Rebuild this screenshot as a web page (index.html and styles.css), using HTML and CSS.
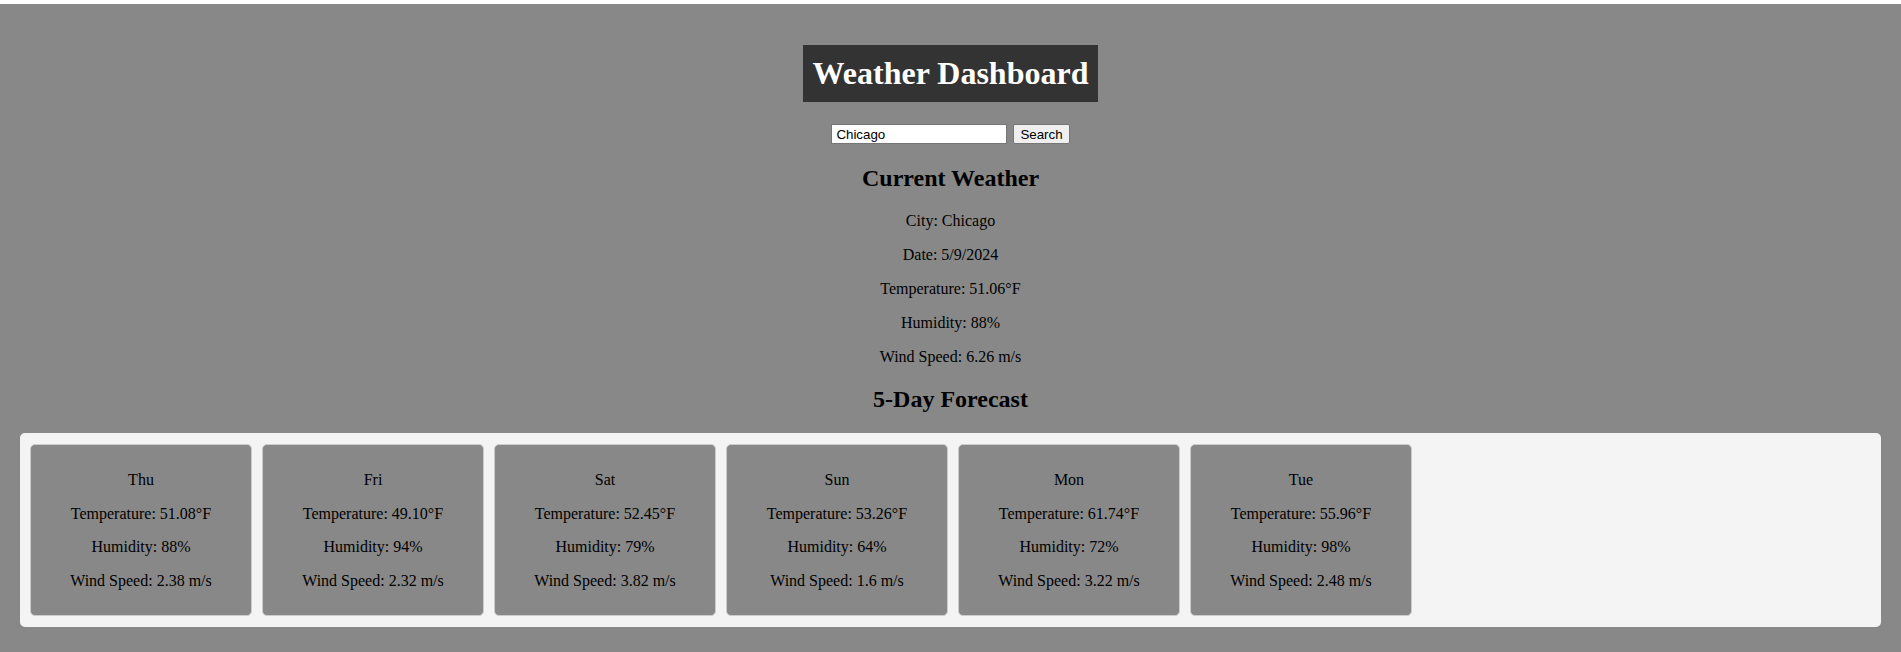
FILE: index.html
```html
<!DOCTYPE html>
<html lang="en">
<head>
<meta charset="UTF-8">
<title>Weather Dashboard</title>
<link rel="stylesheet" href="styles.css">
</head>
<body>
  <h1 class="title">Weather Dashboard</h1>
  <div class="search">
    <input class="search-input" type="text" value="Chicago">
    <button class="search-btn" type="button">Search</button>
  </div>
  <section class="current">
    <h2 class="section-title">Current Weather</h2>
    <p>City: Chicago</p>
    <p>Date: 5/9/2024</p>
    <p>Temperature: 51.06°F</p>
    <p>Humidity: 88%</p>
    <p>Wind Speed: 6.26 m/s</p>
  </section>
  <h2 class="section-title forecast-title">5-Day Forecast</h2>
  <div class="forecast">
    <div class="card"><p>Thu</p><p>Temperature: 51.08°F</p><p>Humidity: 88%</p><p>Wind Speed: 2.38 m/s</p></div>
    <div class="card"><p>Fri</p><p>Temperature: 49.10°F</p><p>Humidity: 94%</p><p>Wind Speed: 2.32 m/s</p></div>
    <div class="card"><p>Sat</p><p>Temperature: 52.45°F</p><p>Humidity: 79%</p><p>Wind Speed: 3.82 m/s</p></div>
    <div class="card"><p>Sun</p><p>Temperature: 53.26°F</p><p>Humidity: 64%</p><p>Wind Speed: 1.6 m/s</p></div>
    <div class="card"><p>Mon</p><p>Temperature: 61.74°F</p><p>Humidity: 72%</p><p>Wind Speed: 3.22 m/s</p></div>
    <div class="card"><p>Tue</p><p>Temperature: 55.96°F</p><p>Humidity: 98%</p><p>Wind Speed: 2.48 m/s</p></div>
  </div>
</body>
</html>
```
FILE: styles.css
```css
html {
  background: #ffffff;
}
body {
  margin: 4px 0 0;
  padding: 20px;
  box-sizing: border-box;
  min-height: calc(100vh - 4px);
  background: #888888;
  color: #000;
  font-family: "Liberation Serif", "Times New Roman", serif;
  font-size: 16px;
  text-align: center;
}
.title {
  width: fit-content;
  margin: 21.44px auto;
  padding: 10px;
  background: #333333;
  color: #ffffff;
  font-size: 32px;
  font-weight: bold;
}
.search {
  display: flex;
  justify-content: center;
  align-items: center;
  gap: 6px;
  height: 21px;
}
.search-input {
  box-sizing: border-box;
  width: 176px;
  height: 20px;
  margin: 0;
  padding: 1px 4px;
  border: 1px solid #767676;
  background: #fff;
  font-family: "Liberation Sans", Arial, sans-serif;
  font-size: 13.33px;
  color: #000;
}
.search-btn {
  box-sizing: border-box;
  height: 20px;
  margin: 0;
  padding: 1px 6px;
  border: 1px solid #767676;
  border-radius: 2px;
  background: #efefef;
  font-family: "Liberation Sans", Arial, sans-serif;
  font-size: 13.33px;
  color: #000;
}
.section-title {
  font-size: 24px;
  font-weight: bold;
  margin: 19.92px 0;
}
.forecast-title {
  margin-bottom: 20.5px;
}
.current p {
  margin: 16px 0;
  line-height: 18px;
}
.forecast {
  display: flex;
  gap: 10px;
  padding: 11px 10px;
  background: #f4f4f4;
  border-radius: 5px;
}
.card {
  width: 200px;
  padding: 10px;
  border: 1px solid #cccccc;
  border-radius: 5px;
  background: #888888;
}
.card p {
  margin: 16px 0;
  line-height: 17.6px;
}
```
